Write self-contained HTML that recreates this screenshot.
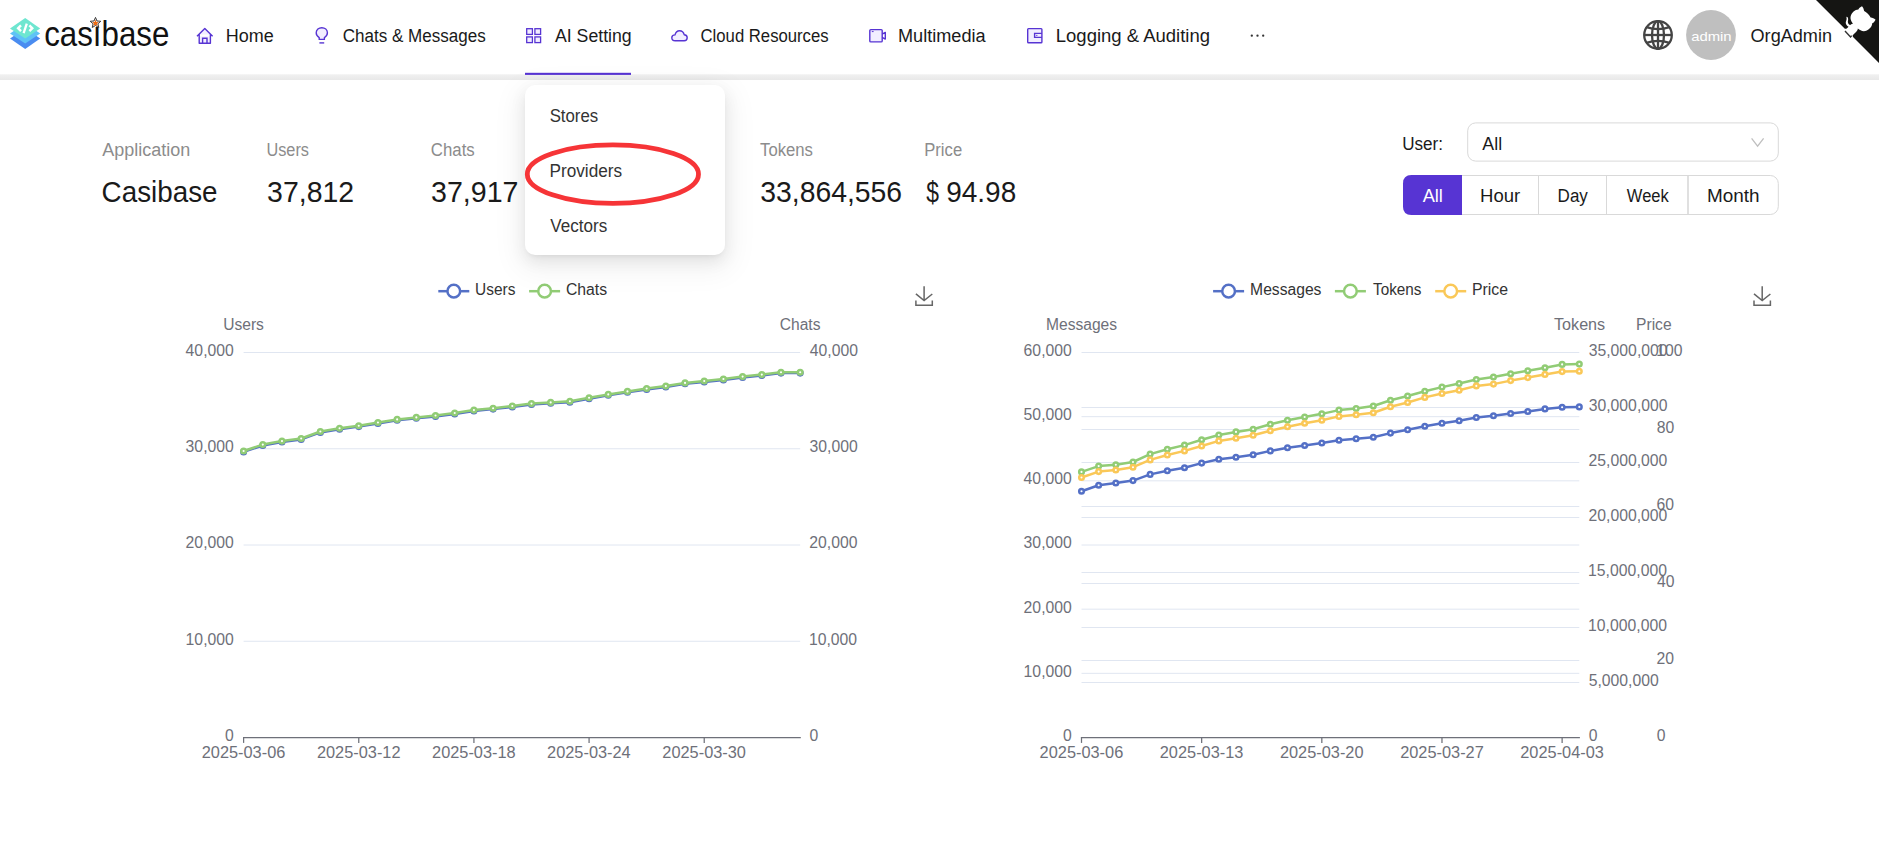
<!DOCTYPE html>
<html><head><meta charset="utf-8"><title>Casibase</title>
<style>
html,body{margin:0;padding:0;background:#fff;width:1879px;height:841px;overflow:hidden;position:relative;font-family:"Liberation Sans", sans-serif;}
svg text{font-family:"Liberation Sans", sans-serif;}
.band{position:absolute;left:0;top:74px;width:1879px;height:6px;background:linear-gradient(#f7f7f7 0%,#efefef 25%,#e8e8e8 100%);z-index:0}
.dd{position:absolute;left:525px;top:85px;width:200px;height:170px;background:#fff;border-radius:10px;
box-shadow:0 6px 16px 0 rgba(0,0,0,0.08),0 3px 6px -4px rgba(0,0,0,0.12),0 9px 28px 8px rgba(0,0,0,0.05);z-index:2}
.layer{position:absolute;left:0;top:0}
</style></head>
<body>
<div class="band"></div>
<svg class="layer" style="z-index:1" width="1879" height="841" viewBox="0 0 1879 841">
<g><polygon points="10,38.4 25.2,28.2 40.2,38.4 25.2,48.9" fill="#4a8cf0"/><polygon points="10,33.4 25.2,23.2 40.2,33.4 25.2,43.6" fill="#60c3f6"/><polygon points="10,28.4 25.2,17.9 40.2,28.4 25.2,38.4" fill="#6ee6d0"/><path d="M21.0,25.3 L18.1,28.2 L21.0,31.1" fill="none" stroke="#fff" stroke-width="2.4"/><path d="M29.4,25.3 L32.3,28.2 L29.4,31.1" fill="none" stroke="#fff" stroke-width="2.4"/><path d="M26.8,23.6 L23.6,33.2" fill="none" stroke="#fff" stroke-width="2.3"/></g><text x="44.17" y="46.10" font-size="34.3" fill="#111" textLength="125.22" lengthAdjust="spacingAndGlyphs">casıbase</text><polygon points="95.50,17.40 96.97,20.98 100.83,21.27 97.88,23.77 98.79,27.53 95.50,25.50 92.21,27.53 93.12,23.77 90.17,21.27 94.03,20.98" fill="#fff" stroke="#3a3a3a" stroke-width="1" stroke-linejoin="round"/><polygon points="95.50,19.80 96.44,21.91 98.73,22.15 97.02,23.69 97.50,25.95 95.50,24.80 93.50,25.95 93.98,23.69 92.27,22.15 94.56,21.91" fill="#ec6a12"/><text x="225.82" y="41.70" font-size="18" fill="#1a1a1a" textLength="47.97" lengthAdjust="spacingAndGlyphs">Home</text><text x="342.73" y="41.70" font-size="18" fill="#1a1a1a" textLength="143.08" lengthAdjust="spacingAndGlyphs">Chats &amp; Messages</text><text x="554.97" y="41.70" font-size="18" fill="#1a1a1a" textLength="76.67" lengthAdjust="spacingAndGlyphs">AI Setting</text><text x="700.55" y="41.70" font-size="18" fill="#1a1a1a" textLength="128.05" lengthAdjust="spacingAndGlyphs">Cloud Resources</text><text x="898.01" y="41.70" font-size="18" fill="#1a1a1a" textLength="87.59" lengthAdjust="spacingAndGlyphs">Multimedia</text><text x="1055.79" y="41.70" font-size="18" fill="#1a1a1a" textLength="154.29" lengthAdjust="spacingAndGlyphs">Logging &amp; Auditing</text><circle cx="1251.8" cy="35.7" r="1.15" fill="#333"/><circle cx="1257.5" cy="35.7" r="1.15" fill="#333"/><circle cx="1263.2" cy="35.7" r="1.15" fill="#333"/><rect x="525" y="72.8" width="106" height="2.1" fill="#5734d3"/><path d="M197,36.2 L204.8,28.4 L212.6,36.2 M199.2,34.4 L199.2,43.2 L210.4,43.2 L210.4,34.4" fill="#f2eeff" stroke="#5734d3" stroke-width="1.4" stroke-linejoin="round"/><path d="M202.6,43.2 L202.6,38.2 L207,38.2 L207,43.2" fill="none" stroke="#5734d3" stroke-width="1.4"/><path d="M319.2,39.4 L319.2,37.6 C316.8,36.2 316.2,34.2 316.2,32.8 C316.2,29.6 318.8,27.7 321.8,27.7 C324.8,27.7 327.4,29.6 327.4,32.8 C327.4,34.2 326.8,36.2 324.4,37.6 L324.4,39.4 Z" fill="#f2eeff" stroke="#5734d3" stroke-width="1.4" stroke-linejoin="round"/><path d="M319.4,42.9 L324.2,42.9" stroke="#5734d3" stroke-width="1.4"/><rect x="526.7" y="28.7" width="5.7" height="5.7" fill="#f2eeff" stroke="#5734d3" stroke-width="1.3"/><rect x="526.7" y="36.9" width="5.7" height="5.7" fill="#f2eeff" stroke="#5734d3" stroke-width="1.3"/><rect x="534.9" y="28.7" width="5.7" height="5.7" fill="#f2eeff" stroke="#5734d3" stroke-width="1.3"/><rect x="534.9" y="36.9" width="5.7" height="5.7" fill="#f2eeff" stroke="#5734d3" stroke-width="1.3"/><path d="M675.2,40.8 C672.9,40.8 671.8,39.4 671.8,37.8 C671.8,36 673.2,34.9 675,34.9 C675.6,32.2 677.4,30.7 679.6,30.7 C682,30.7 683.6,32.3 684.2,34.7 C686,34.8 687.2,36.1 687.2,37.8 C687.2,39.5 686,40.8 684.1,40.8 Z" fill="#f2eeff" stroke="#5734d3" stroke-width="1.4" stroke-linejoin="round"/><rect x="869.8" y="29.6" width="12.4" height="12.3" rx="1" fill="#f2eeff" stroke="#5734d3" stroke-width="1.4"/><path d="M882.2,34.2 L885.3,32.4 L885.3,39.1 L882.2,37.3" fill="none" stroke="#5734d3" stroke-width="1.4" stroke-linejoin="round"/><path d="M871.8,31.6 L873.6,31.6" stroke="#5734d3" stroke-width="1"/><rect x="1027.7" y="28.6" width="14.2" height="14.2" rx="0.8" fill="#f2eeff" stroke="#5734d3" stroke-width="1.4"/><path d="M1041.9,33.4 L1034.6,33.4 L1034.6,37.4 L1041.9,37.4" fill="none" stroke="#5734d3" stroke-width="1.4"/><path d="M1036.2,35.4 L1037.4,35.4" stroke="#5734d3" stroke-width="1"/><g fill="none" stroke="#444" stroke-width="2.3"><circle cx="1658" cy="35" r="13.8"/><ellipse cx="1658" cy="35" rx="6" ry="13.8"/><line x1="1658" y1="21.2" x2="1658" y2="48.8"/><line x1="1644.2" y1="35" x2="1671.8" y2="35"/><path d="M1646.5,27.2 Q1658,31 1669.5,27.2"/><path d="M1646.5,42.8 Q1658,39 1669.5,42.8"/></g><circle cx="1711" cy="35" r="24.9" fill="#bfbfbf"/><text x="1691.17" y="40.70" font-size="13.4" fill="#fff" textLength="40.50" lengthAdjust="spacingAndGlyphs">admin</text><text x="1750.54" y="41.90" font-size="18" fill="#1a1a1a" textLength="81.53" lengthAdjust="spacingAndGlyphs">OrgAdmin</text><path d="M1845,31 L1850.5,37 L1856,31" fill="none" stroke="#333" stroke-width="1.4"/><text x="102.36" y="155.70" font-size="18" fill="#8c8c8c" textLength="88.00" lengthAdjust="spacingAndGlyphs">Application</text><text x="266.44" y="155.70" font-size="18" fill="#8c8c8c" textLength="42.55" lengthAdjust="spacingAndGlyphs">Users</text><text x="430.85" y="155.70" font-size="18" fill="#8c8c8c" textLength="43.86" lengthAdjust="spacingAndGlyphs">Chats</text><text x="594.94" y="155.70" font-size="18" fill="#8c8c8c" textLength="75.66" lengthAdjust="spacingAndGlyphs">Messages</text><text x="760.04" y="155.70" font-size="18" fill="#8c8c8c" textLength="52.95" lengthAdjust="spacingAndGlyphs">Tokens</text><text x="924.24" y="155.70" font-size="18" fill="#8c8c8c" textLength="37.90" lengthAdjust="spacingAndGlyphs">Price</text><text x="101.59" y="201.60" font-size="29.5" fill="#1a1a1a" textLength="115.95" lengthAdjust="spacingAndGlyphs">Casibase</text><text x="267.12" y="201.60" font-size="29.5" fill="#1a1a1a" textLength="87.01" lengthAdjust="spacingAndGlyphs">37,812</text><text x="431.01" y="201.60" font-size="29.5" fill="#1a1a1a" textLength="87.43" lengthAdjust="spacingAndGlyphs">37,917</text><text x="595.67" y="201.60" font-size="29.5" fill="#1a1a1a" textLength="86.66" lengthAdjust="spacingAndGlyphs">51,234</text><text x="760.22" y="201.60" font-size="29.5" fill="#1a1a1a" textLength="141.93" lengthAdjust="spacingAndGlyphs">33,864,556</text><text x="926.25" y="201.60" font-size="29.5" fill="#1a1a1a" textLength="12.71" lengthAdjust="spacingAndGlyphs">$</text><text x="946.19" y="201.60" font-size="29.5" fill="#1a1a1a" textLength="70.03" lengthAdjust="spacingAndGlyphs">94.98</text><text x="1402.18" y="150.00" font-size="18" fill="#1a1a1a" textLength="40.78" lengthAdjust="spacingAndGlyphs">User:</text><rect x="1467.7" y="122.9" width="310.6" height="38.2" rx="8" fill="#fff" stroke="#d9d9d9" stroke-width="1"/><text x="1482.37" y="150.00" font-size="18" fill="#1a1a1a" textLength="19.72" lengthAdjust="spacingAndGlyphs">All</text><path d="M1751.6,138.4 L1757.6,146.2 L1763.6,138.4" fill="none" stroke="#bfbfbf" stroke-width="1.3"/><rect x="1403.5" y="175.5" width="374.8" height="39" rx="8" fill="#fff" stroke="#d9d9d9" stroke-width="1"/><path d="M1462,175 L1411.5,175 Q1403,175 1403,183.5 L1403,206.5 Q1403,215 1411.5,215 L1462,215 Z" fill="#5734d3"/><line x1="1538.5" y1="175.5" x2="1538.5" y2="214.5" stroke="#d9d9d9" stroke-width="1"/><line x1="1606.5" y1="175.5" x2="1606.5" y2="214.5" stroke="#d9d9d9" stroke-width="1"/><line x1="1688" y1="175.5" x2="1688" y2="214.5" stroke="#d9d9d9" stroke-width="1.6"/><text x="1422.66" y="202.00" font-size="18" fill="#fff" textLength="20.25" lengthAdjust="spacingAndGlyphs">All</text><text x="1480.08" y="202.00" font-size="18" fill="#1a1a1a" textLength="40.13" lengthAdjust="spacingAndGlyphs">Hour</text><text x="1557.61" y="202.00" font-size="18" fill="#1a1a1a" textLength="30.23" lengthAdjust="spacingAndGlyphs">Day</text><text x="1626.83" y="202.00" font-size="18" fill="#1a1a1a" textLength="41.95" lengthAdjust="spacingAndGlyphs">Week</text><text x="1706.95" y="202.00" font-size="18" fill="#1a1a1a" textLength="52.58" lengthAdjust="spacingAndGlyphs">Month</text><text x="225.05" y="740.90" font-size="15.6" fill="#6e7079" textLength="8.76" lengthAdjust="spacingAndGlyphs">0</text><text x="809.48" y="740.90" font-size="15.6" fill="#6e7079" textLength="8.76" lengthAdjust="spacingAndGlyphs">0</text><line x1="243.6" y1="641.25" x2="800.2" y2="641.25" stroke="#e0e6f1" stroke-width="1"/><text x="185.62" y="644.65" font-size="15.6" fill="#6e7079" textLength="48.19" lengthAdjust="spacingAndGlyphs">10,000</text><text x="808.90" y="644.65" font-size="15.6" fill="#6e7079" textLength="48.19" lengthAdjust="spacingAndGlyphs">10,000</text><line x1="243.6" y1="545.0" x2="800.2" y2="545.0" stroke="#e0e6f1" stroke-width="1"/><text x="185.62" y="548.40" font-size="15.6" fill="#6e7079" textLength="48.19" lengthAdjust="spacingAndGlyphs">20,000</text><text x="809.31" y="548.40" font-size="15.6" fill="#6e7079" textLength="48.19" lengthAdjust="spacingAndGlyphs">20,000</text><line x1="243.6" y1="448.75" x2="800.2" y2="448.75" stroke="#e0e6f1" stroke-width="1"/><text x="185.62" y="452.15" font-size="15.6" fill="#6e7079" textLength="48.19" lengthAdjust="spacingAndGlyphs">30,000</text><text x="809.50" y="452.15" font-size="15.6" fill="#6e7079" textLength="48.19" lengthAdjust="spacingAndGlyphs">30,000</text><line x1="243.6" y1="352.5" x2="800.2" y2="352.5" stroke="#e0e6f1" stroke-width="1"/><text x="185.62" y="355.90" font-size="15.6" fill="#6e7079" textLength="48.19" lengthAdjust="spacingAndGlyphs">40,000</text><text x="809.74" y="355.90" font-size="15.6" fill="#6e7079" textLength="48.19" lengthAdjust="spacingAndGlyphs">40,000</text><line x1="243.0" y1="737.5" x2="800.8000000000001" y2="737.5" stroke="#6e7079" stroke-width="1.25"/><line x1="243.60" y1="737.5" x2="243.60" y2="742.9" stroke="#6e7079" stroke-width="1.25"/><text x="201.73" y="758.40" font-size="15.6" fill="#6e7079" textLength="83.63" lengthAdjust="spacingAndGlyphs">2025-03-06</text><line x1="358.76" y1="737.5" x2="358.76" y2="742.9" stroke="#6e7079" stroke-width="1.25"/><text x="316.94" y="758.40" font-size="15.6" fill="#6e7079" textLength="83.63" lengthAdjust="spacingAndGlyphs">2025-03-12</text><line x1="473.92" y1="737.5" x2="473.92" y2="742.9" stroke="#6e7079" stroke-width="1.25"/><text x="432.05" y="758.40" font-size="15.6" fill="#6e7079" textLength="83.63" lengthAdjust="spacingAndGlyphs">2025-03-18</text><line x1="589.08" y1="737.5" x2="589.08" y2="742.9" stroke="#6e7079" stroke-width="1.25"/><text x="547.09" y="758.40" font-size="15.6" fill="#6e7079" textLength="83.63" lengthAdjust="spacingAndGlyphs">2025-03-24</text><line x1="704.23" y1="737.5" x2="704.23" y2="742.9" stroke="#6e7079" stroke-width="1.25"/><text x="662.33" y="758.40" font-size="15.6" fill="#6e7079" textLength="83.63" lengthAdjust="spacingAndGlyphs">2025-03-30</text><text x="223.16" y="329.80" font-size="15.6" fill="#6e7079" textLength="40.74" lengthAdjust="spacingAndGlyphs">Users</text><text x="779.71" y="329.80" font-size="15.6" fill="#6e7079" textLength="40.75" lengthAdjust="spacingAndGlyphs">Chats</text><polyline points="243.60,451.90 262.79,445.50 281.99,442.00 301.18,439.40 320.37,432.40 339.57,429.20 358.76,426.60 377.95,423.40 397.14,420.30 416.34,418.30 435.53,416.40 454.72,413.90 473.92,411.00 493.11,409.10 512.30,406.90 531.50,404.50 550.69,403.30 569.88,402.20 589.08,398.70 608.27,395.30 627.46,392.30 646.66,389.40 665.85,387.00 685.04,383.80 704.23,381.90 723.43,379.90 742.62,377.50 761.81,375.50 781.01,373.10 800.20,373.10" fill="none" stroke="#5470c6" stroke-width="2.5" stroke-linejoin="round"/><circle cx="243.60" cy="451.90" r="2.3" fill="#fff" stroke="#5470c6" stroke-width="2.5"/><circle cx="262.79" cy="445.50" r="2.3" fill="#fff" stroke="#5470c6" stroke-width="2.5"/><circle cx="281.99" cy="442.00" r="2.3" fill="#fff" stroke="#5470c6" stroke-width="2.5"/><circle cx="301.18" cy="439.40" r="2.3" fill="#fff" stroke="#5470c6" stroke-width="2.5"/><circle cx="320.37" cy="432.40" r="2.3" fill="#fff" stroke="#5470c6" stroke-width="2.5"/><circle cx="339.57" cy="429.20" r="2.3" fill="#fff" stroke="#5470c6" stroke-width="2.5"/><circle cx="358.76" cy="426.60" r="2.3" fill="#fff" stroke="#5470c6" stroke-width="2.5"/><circle cx="377.95" cy="423.40" r="2.3" fill="#fff" stroke="#5470c6" stroke-width="2.5"/><circle cx="397.14" cy="420.30" r="2.3" fill="#fff" stroke="#5470c6" stroke-width="2.5"/><circle cx="416.34" cy="418.30" r="2.3" fill="#fff" stroke="#5470c6" stroke-width="2.5"/><circle cx="435.53" cy="416.40" r="2.3" fill="#fff" stroke="#5470c6" stroke-width="2.5"/><circle cx="454.72" cy="413.90" r="2.3" fill="#fff" stroke="#5470c6" stroke-width="2.5"/><circle cx="473.92" cy="411.00" r="2.3" fill="#fff" stroke="#5470c6" stroke-width="2.5"/><circle cx="493.11" cy="409.10" r="2.3" fill="#fff" stroke="#5470c6" stroke-width="2.5"/><circle cx="512.30" cy="406.90" r="2.3" fill="#fff" stroke="#5470c6" stroke-width="2.5"/><circle cx="531.50" cy="404.50" r="2.3" fill="#fff" stroke="#5470c6" stroke-width="2.5"/><circle cx="550.69" cy="403.30" r="2.3" fill="#fff" stroke="#5470c6" stroke-width="2.5"/><circle cx="569.88" cy="402.20" r="2.3" fill="#fff" stroke="#5470c6" stroke-width="2.5"/><circle cx="589.08" cy="398.70" r="2.3" fill="#fff" stroke="#5470c6" stroke-width="2.5"/><circle cx="608.27" cy="395.30" r="2.3" fill="#fff" stroke="#5470c6" stroke-width="2.5"/><circle cx="627.46" cy="392.30" r="2.3" fill="#fff" stroke="#5470c6" stroke-width="2.5"/><circle cx="646.66" cy="389.40" r="2.3" fill="#fff" stroke="#5470c6" stroke-width="2.5"/><circle cx="665.85" cy="387.00" r="2.3" fill="#fff" stroke="#5470c6" stroke-width="2.5"/><circle cx="685.04" cy="383.80" r="2.3" fill="#fff" stroke="#5470c6" stroke-width="2.5"/><circle cx="704.23" cy="381.90" r="2.3" fill="#fff" stroke="#5470c6" stroke-width="2.5"/><circle cx="723.43" cy="379.90" r="2.3" fill="#fff" stroke="#5470c6" stroke-width="2.5"/><circle cx="742.62" cy="377.50" r="2.3" fill="#fff" stroke="#5470c6" stroke-width="2.5"/><circle cx="761.81" cy="375.50" r="2.3" fill="#fff" stroke="#5470c6" stroke-width="2.5"/><circle cx="781.01" cy="373.10" r="2.3" fill="#fff" stroke="#5470c6" stroke-width="2.5"/><circle cx="800.20" cy="373.10" r="2.3" fill="#fff" stroke="#5470c6" stroke-width="2.5"/><polyline points="243.60,451.00 262.79,444.60 281.99,441.10 301.18,438.50 320.37,431.50 339.57,428.30 358.76,425.70 377.95,422.50 397.14,419.40 416.34,417.40 435.53,415.50 454.72,413.00 473.92,410.10 493.11,408.20 512.30,406.00 531.50,403.60 550.69,402.40 569.88,401.30 589.08,397.80 608.27,394.40 627.46,391.40 646.66,388.50 665.85,386.10 685.04,382.90 704.23,381.00 723.43,379.00 742.62,376.60 761.81,374.60 781.01,372.20 800.20,372.20" fill="none" stroke="#91cc75" stroke-width="2.5" stroke-linejoin="round"/><circle cx="243.60" cy="451.00" r="2.3" fill="#fff" stroke="#91cc75" stroke-width="2.5"/><circle cx="262.79" cy="444.60" r="2.3" fill="#fff" stroke="#91cc75" stroke-width="2.5"/><circle cx="281.99" cy="441.10" r="2.3" fill="#fff" stroke="#91cc75" stroke-width="2.5"/><circle cx="301.18" cy="438.50" r="2.3" fill="#fff" stroke="#91cc75" stroke-width="2.5"/><circle cx="320.37" cy="431.50" r="2.3" fill="#fff" stroke="#91cc75" stroke-width="2.5"/><circle cx="339.57" cy="428.30" r="2.3" fill="#fff" stroke="#91cc75" stroke-width="2.5"/><circle cx="358.76" cy="425.70" r="2.3" fill="#fff" stroke="#91cc75" stroke-width="2.5"/><circle cx="377.95" cy="422.50" r="2.3" fill="#fff" stroke="#91cc75" stroke-width="2.5"/><circle cx="397.14" cy="419.40" r="2.3" fill="#fff" stroke="#91cc75" stroke-width="2.5"/><circle cx="416.34" cy="417.40" r="2.3" fill="#fff" stroke="#91cc75" stroke-width="2.5"/><circle cx="435.53" cy="415.50" r="2.3" fill="#fff" stroke="#91cc75" stroke-width="2.5"/><circle cx="454.72" cy="413.00" r="2.3" fill="#fff" stroke="#91cc75" stroke-width="2.5"/><circle cx="473.92" cy="410.10" r="2.3" fill="#fff" stroke="#91cc75" stroke-width="2.5"/><circle cx="493.11" cy="408.20" r="2.3" fill="#fff" stroke="#91cc75" stroke-width="2.5"/><circle cx="512.30" cy="406.00" r="2.3" fill="#fff" stroke="#91cc75" stroke-width="2.5"/><circle cx="531.50" cy="403.60" r="2.3" fill="#fff" stroke="#91cc75" stroke-width="2.5"/><circle cx="550.69" cy="402.40" r="2.3" fill="#fff" stroke="#91cc75" stroke-width="2.5"/><circle cx="569.88" cy="401.30" r="2.3" fill="#fff" stroke="#91cc75" stroke-width="2.5"/><circle cx="589.08" cy="397.80" r="2.3" fill="#fff" stroke="#91cc75" stroke-width="2.5"/><circle cx="608.27" cy="394.40" r="2.3" fill="#fff" stroke="#91cc75" stroke-width="2.5"/><circle cx="627.46" cy="391.40" r="2.3" fill="#fff" stroke="#91cc75" stroke-width="2.5"/><circle cx="646.66" cy="388.50" r="2.3" fill="#fff" stroke="#91cc75" stroke-width="2.5"/><circle cx="665.85" cy="386.10" r="2.3" fill="#fff" stroke="#91cc75" stroke-width="2.5"/><circle cx="685.04" cy="382.90" r="2.3" fill="#fff" stroke="#91cc75" stroke-width="2.5"/><circle cx="704.23" cy="381.00" r="2.3" fill="#fff" stroke="#91cc75" stroke-width="2.5"/><circle cx="723.43" cy="379.00" r="2.3" fill="#fff" stroke="#91cc75" stroke-width="2.5"/><circle cx="742.62" cy="376.60" r="2.3" fill="#fff" stroke="#91cc75" stroke-width="2.5"/><circle cx="761.81" cy="374.60" r="2.3" fill="#fff" stroke="#91cc75" stroke-width="2.5"/><circle cx="781.01" cy="372.20" r="2.3" fill="#fff" stroke="#91cc75" stroke-width="2.5"/><circle cx="800.20" cy="372.20" r="2.3" fill="#fff" stroke="#91cc75" stroke-width="2.5"/><line x1="438.3" y1="291.2" x2="469.3" y2="291.2" stroke="#5470c6" stroke-width="2.5"/><circle cx="453.8" cy="291.2" r="6.35" fill="#fff" stroke="#5470c6" stroke-width="2.5"/><text x="475.11" y="294.80" font-size="15.6" fill="#333" textLength="40.35" lengthAdjust="spacingAndGlyphs">Users</text><line x1="529.1" y1="291.2" x2="560.1" y2="291.2" stroke="#91cc75" stroke-width="2.5"/><circle cx="544.6" cy="291.2" r="6.35" fill="#fff" stroke="#91cc75" stroke-width="2.5"/><text x="565.90" y="294.80" font-size="15.6" fill="#333" textLength="41.17" lengthAdjust="spacingAndGlyphs">Chats</text><path d="M915.9,293.8 L924.1,300.6 L932.3000000000001,294 M924.1,286.3 L924.1,300.6 M915.9,300.6 L915.9,305.2 L932.3000000000001,305.2 L932.3000000000001,300.6" fill="none" stroke="#666" stroke-width="1.5"/><line x1="1081.5" y1="352.5" x2="1579.3" y2="352.5" stroke="#e0e6f1" stroke-width="1"/><line x1="1081.5" y1="407.5" x2="1579.3" y2="407.5" stroke="#e0e6f1" stroke-width="1"/><line x1="1081.5" y1="416.67" x2="1579.3" y2="416.67" stroke="#e0e6f1" stroke-width="1"/><line x1="1081.5" y1="429.5" x2="1579.3" y2="429.5" stroke="#e0e6f1" stroke-width="1"/><line x1="1081.5" y1="462.5" x2="1579.3" y2="462.5" stroke="#e0e6f1" stroke-width="1"/><line x1="1081.5" y1="480.83" x2="1579.3" y2="480.83" stroke="#e0e6f1" stroke-width="1"/><line x1="1081.5" y1="506.5" x2="1579.3" y2="506.5" stroke="#e0e6f1" stroke-width="1"/><line x1="1081.5" y1="517.5" x2="1579.3" y2="517.5" stroke="#e0e6f1" stroke-width="1"/><line x1="1081.5" y1="545.0" x2="1579.3" y2="545.0" stroke="#e0e6f1" stroke-width="1"/><line x1="1081.5" y1="572.5" x2="1579.3" y2="572.5" stroke="#e0e6f1" stroke-width="1"/><line x1="1081.5" y1="583.5" x2="1579.3" y2="583.5" stroke="#e0e6f1" stroke-width="1"/><line x1="1081.5" y1="609.17" x2="1579.3" y2="609.17" stroke="#e0e6f1" stroke-width="1"/><line x1="1081.5" y1="627.5" x2="1579.3" y2="627.5" stroke="#e0e6f1" stroke-width="1"/><line x1="1081.5" y1="660.5" x2="1579.3" y2="660.5" stroke="#e0e6f1" stroke-width="1"/><line x1="1081.5" y1="673.33" x2="1579.3" y2="673.33" stroke="#e0e6f1" stroke-width="1"/><line x1="1081.5" y1="682.5" x2="1579.3" y2="682.5" stroke="#e0e6f1" stroke-width="1"/><text x="1063.05" y="740.90" font-size="15.6" fill="#6e7079" textLength="8.76" lengthAdjust="spacingAndGlyphs">0</text><text x="1023.62" y="676.73" font-size="15.6" fill="#6e7079" textLength="48.19" lengthAdjust="spacingAndGlyphs">10,000</text><text x="1023.62" y="612.57" font-size="15.6" fill="#6e7079" textLength="48.19" lengthAdjust="spacingAndGlyphs">20,000</text><text x="1023.62" y="548.40" font-size="15.6" fill="#6e7079" textLength="48.19" lengthAdjust="spacingAndGlyphs">30,000</text><text x="1023.62" y="484.23" font-size="15.6" fill="#6e7079" textLength="48.19" lengthAdjust="spacingAndGlyphs">40,000</text><text x="1023.62" y="420.07" font-size="15.6" fill="#6e7079" textLength="48.19" lengthAdjust="spacingAndGlyphs">50,000</text><text x="1023.62" y="355.90" font-size="15.6" fill="#6e7079" textLength="48.19" lengthAdjust="spacingAndGlyphs">60,000</text><text x="1588.68" y="740.90" font-size="15.6" fill="#6e7079" textLength="8.76" lengthAdjust="spacingAndGlyphs">0</text><text x="1588.67" y="685.90" font-size="15.6" fill="#6e7079" textLength="70.09" lengthAdjust="spacingAndGlyphs">5,000,000</text><text x="1588.10" y="630.90" font-size="15.6" fill="#6e7079" textLength="78.86" lengthAdjust="spacingAndGlyphs">10,000,000</text><text x="1588.10" y="575.90" font-size="15.6" fill="#6e7079" textLength="78.86" lengthAdjust="spacingAndGlyphs">15,000,000</text><text x="1588.51" y="520.90" font-size="15.6" fill="#6e7079" textLength="78.86" lengthAdjust="spacingAndGlyphs">20,000,000</text><text x="1588.51" y="465.90" font-size="15.6" fill="#6e7079" textLength="78.86" lengthAdjust="spacingAndGlyphs">25,000,000</text><text x="1588.70" y="410.90" font-size="15.6" fill="#6e7079" textLength="78.86" lengthAdjust="spacingAndGlyphs">30,000,000</text><text x="1588.70" y="355.90" font-size="15.6" fill="#6e7079" textLength="78.86" lengthAdjust="spacingAndGlyphs">35,000,000</text><text x="1656.78" y="740.90" font-size="15.6" fill="#6e7079" textLength="8.76" lengthAdjust="spacingAndGlyphs">0</text><text x="1656.61" y="663.90" font-size="15.6" fill="#6e7079" textLength="17.53" lengthAdjust="spacingAndGlyphs">20</text><text x="1657.04" y="586.90" font-size="15.6" fill="#6e7079" textLength="17.53" lengthAdjust="spacingAndGlyphs">40</text><text x="1656.60" y="509.90" font-size="15.6" fill="#6e7079" textLength="17.53" lengthAdjust="spacingAndGlyphs">60</text><text x="1656.72" y="432.90" font-size="15.6" fill="#6e7079" textLength="17.53" lengthAdjust="spacingAndGlyphs">80</text><text x="1656.20" y="355.90" font-size="15.6" fill="#6e7079" textLength="26.29" lengthAdjust="spacingAndGlyphs">100</text><line x1="1080.9" y1="737.5" x2="1579.8999999999999" y2="737.5" stroke="#6e7079" stroke-width="1.25"/><line x1="1081.50" y1="737.5" x2="1081.50" y2="742.9" stroke="#6e7079" stroke-width="1.25"/><text x="1039.63" y="758.40" font-size="15.6" fill="#6e7079" textLength="83.63" lengthAdjust="spacingAndGlyphs">2025-03-06</text><line x1="1201.66" y1="737.5" x2="1201.66" y2="742.9" stroke="#6e7079" stroke-width="1.25"/><text x="1159.79" y="758.40" font-size="15.6" fill="#6e7079" textLength="83.63" lengthAdjust="spacingAndGlyphs">2025-03-13</text><line x1="1321.82" y1="737.5" x2="1321.82" y2="742.9" stroke="#6e7079" stroke-width="1.25"/><text x="1279.91" y="758.40" font-size="15.6" fill="#6e7079" textLength="83.63" lengthAdjust="spacingAndGlyphs">2025-03-20</text><line x1="1441.98" y1="737.5" x2="1441.98" y2="742.9" stroke="#6e7079" stroke-width="1.25"/><text x="1400.16" y="758.40" font-size="15.6" fill="#6e7079" textLength="83.63" lengthAdjust="spacingAndGlyphs">2025-03-27</text><line x1="1562.13" y1="737.5" x2="1562.13" y2="742.9" stroke="#6e7079" stroke-width="1.25"/><text x="1520.27" y="758.40" font-size="15.6" fill="#6e7079" textLength="83.63" lengthAdjust="spacingAndGlyphs">2025-04-03</text><text x="1045.99" y="330.00" font-size="15.6" fill="#6e7079" textLength="71.10" lengthAdjust="spacingAndGlyphs">Messages</text><text x="1554.03" y="330.00" font-size="15.6" fill="#6e7079" textLength="51.16" lengthAdjust="spacingAndGlyphs">Tokens</text><text x="1636.04" y="330.00" font-size="15.6" fill="#6e7079" textLength="35.54" lengthAdjust="spacingAndGlyphs">Price</text><polyline points="1081.50,491.30 1098.67,485.20 1115.83,483.00 1133.00,480.60 1150.16,474.40 1167.33,470.80 1184.49,467.80 1201.66,463.10 1218.82,459.20 1235.99,457.20 1253.16,454.80 1270.32,450.90 1287.49,447.70 1304.65,445.50 1321.82,443.00 1338.98,440.20 1356.15,438.80 1373.31,437.20 1390.48,433.10 1407.64,429.80 1424.81,426.20 1441.98,423.30 1459.14,420.70 1476.31,417.50 1493.47,415.80 1510.64,413.50 1527.80,411.50 1544.97,408.90 1562.13,407.20 1579.30,406.90" fill="none" stroke="#5470c6" stroke-width="2.5" stroke-linejoin="round"/><circle cx="1081.50" cy="491.30" r="2.3" fill="#fff" stroke="#5470c6" stroke-width="2.5"/><circle cx="1098.67" cy="485.20" r="2.3" fill="#fff" stroke="#5470c6" stroke-width="2.5"/><circle cx="1115.83" cy="483.00" r="2.3" fill="#fff" stroke="#5470c6" stroke-width="2.5"/><circle cx="1133.00" cy="480.60" r="2.3" fill="#fff" stroke="#5470c6" stroke-width="2.5"/><circle cx="1150.16" cy="474.40" r="2.3" fill="#fff" stroke="#5470c6" stroke-width="2.5"/><circle cx="1167.33" cy="470.80" r="2.3" fill="#fff" stroke="#5470c6" stroke-width="2.5"/><circle cx="1184.49" cy="467.80" r="2.3" fill="#fff" stroke="#5470c6" stroke-width="2.5"/><circle cx="1201.66" cy="463.10" r="2.3" fill="#fff" stroke="#5470c6" stroke-width="2.5"/><circle cx="1218.82" cy="459.20" r="2.3" fill="#fff" stroke="#5470c6" stroke-width="2.5"/><circle cx="1235.99" cy="457.20" r="2.3" fill="#fff" stroke="#5470c6" stroke-width="2.5"/><circle cx="1253.16" cy="454.80" r="2.3" fill="#fff" stroke="#5470c6" stroke-width="2.5"/><circle cx="1270.32" cy="450.90" r="2.3" fill="#fff" stroke="#5470c6" stroke-width="2.5"/><circle cx="1287.49" cy="447.70" r="2.3" fill="#fff" stroke="#5470c6" stroke-width="2.5"/><circle cx="1304.65" cy="445.50" r="2.3" fill="#fff" stroke="#5470c6" stroke-width="2.5"/><circle cx="1321.82" cy="443.00" r="2.3" fill="#fff" stroke="#5470c6" stroke-width="2.5"/><circle cx="1338.98" cy="440.20" r="2.3" fill="#fff" stroke="#5470c6" stroke-width="2.5"/><circle cx="1356.15" cy="438.80" r="2.3" fill="#fff" stroke="#5470c6" stroke-width="2.5"/><circle cx="1373.31" cy="437.20" r="2.3" fill="#fff" stroke="#5470c6" stroke-width="2.5"/><circle cx="1390.48" cy="433.10" r="2.3" fill="#fff" stroke="#5470c6" stroke-width="2.5"/><circle cx="1407.64" cy="429.80" r="2.3" fill="#fff" stroke="#5470c6" stroke-width="2.5"/><circle cx="1424.81" cy="426.20" r="2.3" fill="#fff" stroke="#5470c6" stroke-width="2.5"/><circle cx="1441.98" cy="423.30" r="2.3" fill="#fff" stroke="#5470c6" stroke-width="2.5"/><circle cx="1459.14" cy="420.70" r="2.3" fill="#fff" stroke="#5470c6" stroke-width="2.5"/><circle cx="1476.31" cy="417.50" r="2.3" fill="#fff" stroke="#5470c6" stroke-width="2.5"/><circle cx="1493.47" cy="415.80" r="2.3" fill="#fff" stroke="#5470c6" stroke-width="2.5"/><circle cx="1510.64" cy="413.50" r="2.3" fill="#fff" stroke="#5470c6" stroke-width="2.5"/><circle cx="1527.80" cy="411.50" r="2.3" fill="#fff" stroke="#5470c6" stroke-width="2.5"/><circle cx="1544.97" cy="408.90" r="2.3" fill="#fff" stroke="#5470c6" stroke-width="2.5"/><circle cx="1562.13" cy="407.20" r="2.3" fill="#fff" stroke="#5470c6" stroke-width="2.5"/><circle cx="1579.30" cy="406.90" r="2.3" fill="#fff" stroke="#5470c6" stroke-width="2.5"/><polyline points="1081.50,471.90 1098.67,466.10 1115.83,464.70 1133.00,462.00 1150.16,454.10 1167.33,449.20 1184.49,445.10 1201.66,439.80 1218.82,435.00 1235.99,431.90 1253.16,429.20 1270.32,424.30 1287.49,420.20 1304.65,417.00 1321.82,413.85 1338.98,410.10 1356.15,408.50 1373.31,406.00 1390.48,400.30 1407.64,396.00 1424.81,391.20 1441.98,387.10 1459.14,383.50 1476.31,379.50 1493.47,377.00 1510.64,373.70 1527.80,370.80 1544.97,367.70 1562.13,364.40 1579.30,364.10" fill="none" stroke="#91cc75" stroke-width="2.5" stroke-linejoin="round"/><circle cx="1081.50" cy="471.90" r="2.3" fill="#fff" stroke="#91cc75" stroke-width="2.5"/><circle cx="1098.67" cy="466.10" r="2.3" fill="#fff" stroke="#91cc75" stroke-width="2.5"/><circle cx="1115.83" cy="464.70" r="2.3" fill="#fff" stroke="#91cc75" stroke-width="2.5"/><circle cx="1133.00" cy="462.00" r="2.3" fill="#fff" stroke="#91cc75" stroke-width="2.5"/><circle cx="1150.16" cy="454.10" r="2.3" fill="#fff" stroke="#91cc75" stroke-width="2.5"/><circle cx="1167.33" cy="449.20" r="2.3" fill="#fff" stroke="#91cc75" stroke-width="2.5"/><circle cx="1184.49" cy="445.10" r="2.3" fill="#fff" stroke="#91cc75" stroke-width="2.5"/><circle cx="1201.66" cy="439.80" r="2.3" fill="#fff" stroke="#91cc75" stroke-width="2.5"/><circle cx="1218.82" cy="435.00" r="2.3" fill="#fff" stroke="#91cc75" stroke-width="2.5"/><circle cx="1235.99" cy="431.90" r="2.3" fill="#fff" stroke="#91cc75" stroke-width="2.5"/><circle cx="1253.16" cy="429.20" r="2.3" fill="#fff" stroke="#91cc75" stroke-width="2.5"/><circle cx="1270.32" cy="424.30" r="2.3" fill="#fff" stroke="#91cc75" stroke-width="2.5"/><circle cx="1287.49" cy="420.20" r="2.3" fill="#fff" stroke="#91cc75" stroke-width="2.5"/><circle cx="1304.65" cy="417.00" r="2.3" fill="#fff" stroke="#91cc75" stroke-width="2.5"/><circle cx="1321.82" cy="413.85" r="2.3" fill="#fff" stroke="#91cc75" stroke-width="2.5"/><circle cx="1338.98" cy="410.10" r="2.3" fill="#fff" stroke="#91cc75" stroke-width="2.5"/><circle cx="1356.15" cy="408.50" r="2.3" fill="#fff" stroke="#91cc75" stroke-width="2.5"/><circle cx="1373.31" cy="406.00" r="2.3" fill="#fff" stroke="#91cc75" stroke-width="2.5"/><circle cx="1390.48" cy="400.30" r="2.3" fill="#fff" stroke="#91cc75" stroke-width="2.5"/><circle cx="1407.64" cy="396.00" r="2.3" fill="#fff" stroke="#91cc75" stroke-width="2.5"/><circle cx="1424.81" cy="391.20" r="2.3" fill="#fff" stroke="#91cc75" stroke-width="2.5"/><circle cx="1441.98" cy="387.10" r="2.3" fill="#fff" stroke="#91cc75" stroke-width="2.5"/><circle cx="1459.14" cy="383.50" r="2.3" fill="#fff" stroke="#91cc75" stroke-width="2.5"/><circle cx="1476.31" cy="379.50" r="2.3" fill="#fff" stroke="#91cc75" stroke-width="2.5"/><circle cx="1493.47" cy="377.00" r="2.3" fill="#fff" stroke="#91cc75" stroke-width="2.5"/><circle cx="1510.64" cy="373.70" r="2.3" fill="#fff" stroke="#91cc75" stroke-width="2.5"/><circle cx="1527.80" cy="370.80" r="2.3" fill="#fff" stroke="#91cc75" stroke-width="2.5"/><circle cx="1544.97" cy="367.70" r="2.3" fill="#fff" stroke="#91cc75" stroke-width="2.5"/><circle cx="1562.13" cy="364.40" r="2.3" fill="#fff" stroke="#91cc75" stroke-width="2.5"/><circle cx="1579.30" cy="364.10" r="2.3" fill="#fff" stroke="#91cc75" stroke-width="2.5"/><polyline points="1081.50,477.50 1098.67,471.60 1115.83,470.00 1133.00,467.20 1150.16,459.90 1167.33,455.00 1184.49,450.90 1201.66,446.00 1218.82,440.90 1235.99,438.20 1253.16,435.20 1270.32,430.80 1287.49,426.70 1304.65,423.20 1321.82,420.30 1338.98,416.40 1356.15,414.70 1373.31,412.80 1390.48,406.80 1407.64,402.50 1424.81,397.40 1441.98,393.50 1459.14,390.20 1476.31,385.90 1493.47,384.10 1510.64,380.60 1527.80,377.60 1544.97,374.40 1562.13,371.60 1579.30,371.30" fill="none" stroke="#fac858" stroke-width="2.5" stroke-linejoin="round"/><circle cx="1081.50" cy="477.50" r="2.3" fill="#fff" stroke="#fac858" stroke-width="2.5"/><circle cx="1098.67" cy="471.60" r="2.3" fill="#fff" stroke="#fac858" stroke-width="2.5"/><circle cx="1115.83" cy="470.00" r="2.3" fill="#fff" stroke="#fac858" stroke-width="2.5"/><circle cx="1133.00" cy="467.20" r="2.3" fill="#fff" stroke="#fac858" stroke-width="2.5"/><circle cx="1150.16" cy="459.90" r="2.3" fill="#fff" stroke="#fac858" stroke-width="2.5"/><circle cx="1167.33" cy="455.00" r="2.3" fill="#fff" stroke="#fac858" stroke-width="2.5"/><circle cx="1184.49" cy="450.90" r="2.3" fill="#fff" stroke="#fac858" stroke-width="2.5"/><circle cx="1201.66" cy="446.00" r="2.3" fill="#fff" stroke="#fac858" stroke-width="2.5"/><circle cx="1218.82" cy="440.90" r="2.3" fill="#fff" stroke="#fac858" stroke-width="2.5"/><circle cx="1235.99" cy="438.20" r="2.3" fill="#fff" stroke="#fac858" stroke-width="2.5"/><circle cx="1253.16" cy="435.20" r="2.3" fill="#fff" stroke="#fac858" stroke-width="2.5"/><circle cx="1270.32" cy="430.80" r="2.3" fill="#fff" stroke="#fac858" stroke-width="2.5"/><circle cx="1287.49" cy="426.70" r="2.3" fill="#fff" stroke="#fac858" stroke-width="2.5"/><circle cx="1304.65" cy="423.20" r="2.3" fill="#fff" stroke="#fac858" stroke-width="2.5"/><circle cx="1321.82" cy="420.30" r="2.3" fill="#fff" stroke="#fac858" stroke-width="2.5"/><circle cx="1338.98" cy="416.40" r="2.3" fill="#fff" stroke="#fac858" stroke-width="2.5"/><circle cx="1356.15" cy="414.70" r="2.3" fill="#fff" stroke="#fac858" stroke-width="2.5"/><circle cx="1373.31" cy="412.80" r="2.3" fill="#fff" stroke="#fac858" stroke-width="2.5"/><circle cx="1390.48" cy="406.80" r="2.3" fill="#fff" stroke="#fac858" stroke-width="2.5"/><circle cx="1407.64" cy="402.50" r="2.3" fill="#fff" stroke="#fac858" stroke-width="2.5"/><circle cx="1424.81" cy="397.40" r="2.3" fill="#fff" stroke="#fac858" stroke-width="2.5"/><circle cx="1441.98" cy="393.50" r="2.3" fill="#fff" stroke="#fac858" stroke-width="2.5"/><circle cx="1459.14" cy="390.20" r="2.3" fill="#fff" stroke="#fac858" stroke-width="2.5"/><circle cx="1476.31" cy="385.90" r="2.3" fill="#fff" stroke="#fac858" stroke-width="2.5"/><circle cx="1493.47" cy="384.10" r="2.3" fill="#fff" stroke="#fac858" stroke-width="2.5"/><circle cx="1510.64" cy="380.60" r="2.3" fill="#fff" stroke="#fac858" stroke-width="2.5"/><circle cx="1527.80" cy="377.60" r="2.3" fill="#fff" stroke="#fac858" stroke-width="2.5"/><circle cx="1544.97" cy="374.40" r="2.3" fill="#fff" stroke="#fac858" stroke-width="2.5"/><circle cx="1562.13" cy="371.60" r="2.3" fill="#fff" stroke="#fac858" stroke-width="2.5"/><circle cx="1579.30" cy="371.30" r="2.3" fill="#fff" stroke="#fac858" stroke-width="2.5"/><line x1="1213.1" y1="291.2" x2="1244.1" y2="291.2" stroke="#5470c6" stroke-width="2.5"/><circle cx="1228.6" cy="291.2" r="6.35" fill="#fff" stroke="#5470c6" stroke-width="2.5"/><text x="1250.12" y="295.00" font-size="15.6" fill="#333" textLength="71.35" lengthAdjust="spacingAndGlyphs">Messages</text><line x1="1334.9" y1="291.2" x2="1365.9" y2="291.2" stroke="#91cc75" stroke-width="2.5"/><circle cx="1350.4" cy="291.2" r="6.35" fill="#fff" stroke="#91cc75" stroke-width="2.5"/><text x="1373.07" y="295.00" font-size="15.6" fill="#333" textLength="48.47" lengthAdjust="spacingAndGlyphs">Tokens</text><line x1="1435.2" y1="291.2" x2="1466.2" y2="291.2" stroke="#fac858" stroke-width="2.5"/><circle cx="1450.7" cy="291.2" r="6.35" fill="#fff" stroke="#fac858" stroke-width="2.5"/><text x="1472.00" y="295.00" font-size="15.6" fill="#333" textLength="36.10" lengthAdjust="spacingAndGlyphs">Price</text><path d="M1754.0,293.8 L1762.2,300.6 L1770.4,294 M1762.2,286.3 L1762.2,300.6 M1754.0,300.6 L1754.0,305.2 L1770.4,305.2 L1770.4,300.6" fill="none" stroke="#666" stroke-width="1.5"/>
</svg>
<div class="dd"></div>
<svg class="layer" style="z-index:3" width="1879" height="841" viewBox="0 0 1879 841">
<text x="549.64" y="122.00" font-size="18" fill="#333333" textLength="48.57" lengthAdjust="spacingAndGlyphs">Stores</text><text x="549.49" y="176.90" font-size="18" fill="#333333" textLength="72.63" lengthAdjust="spacingAndGlyphs">Providers</text><text x="550.33" y="232.00" font-size="18" fill="#333333" textLength="56.88" lengthAdjust="spacingAndGlyphs">Vectors</text><ellipse cx="612.9" cy="174.15" rx="85.6" ry="29.2" fill="none" stroke="#f63437" stroke-width="4.8"/>
</svg>
<svg width="75.75" height="75.75" viewBox="0 0 250 250" style="position:absolute;left:1810.1px;top:-6.1px;z-index:5;fill:#151513;color:#fff"><path d="M0,0 L115,115 L130,115 L142,142 L250,250 L250,0 Z"/><path d="M128.3,109.0 C113.8,99.7 119.0,89.6 119.0,89.6 C122.0,82.7 120.5,78.6 120.5,78.6 C119.2,72.0 123.4,76.3 123.4,76.3 C127.3,80.9 125.5,87.3 125.5,87.3 C122.9,97.6 130.6,101.9 134.4,103.2" fill="currentColor"/><path d="M115.0,115.0 C114.9,115.1 118.7,116.5 119.8,115.4 L133.7,101.6 C136.9,99.2 139.9,98.4 142.2,98.6 C133.8,88.0 127.5,74.4 143.8,58.0 C148.5,53.4 154.0,51.2 159.7,51.0 C160.3,49.4 163.2,43.6 171.4,40.1 C171.4,40.1 176.1,42.5 178.8,56.2 C183.1,58.6 187.2,61.8 190.9,65.4 C194.5,69.0 197.7,73.2 200.1,77.6 C213.8,80.2 216.3,84.9 216.3,84.9 C212.7,93.1 206.9,96.0 205.4,96.6 C205.1,102.4 203.0,107.8 198.3,112.5 C181.9,128.9 168.3,122.5 157.7,114.1 C157.9,116.9 156.7,120.9 152.7,124.9 L141.0,136.5 C139.8,137.7 141.6,141.9 141.8,141.8 Z" fill="currentColor"/></svg>
</body></html>
